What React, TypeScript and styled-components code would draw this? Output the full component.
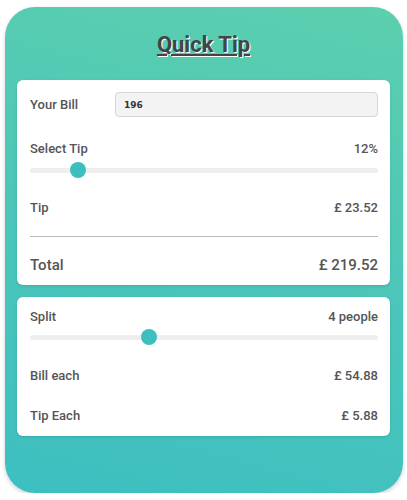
import React, { useState } from "react";
import styled, { createGlobalStyle } from "styled-components";

const GlobalStyle = createGlobalStyle`
  body {
    margin: 0;
    background: #fff;
    font-family: Roboto, "Liberation Sans", sans-serif;
  }
`;

export default function App() {
  const [bill, setBill] = useState("196");
  const [tip, setTip] = useState(12);
  const [people, setPeople] = useState(4);

  const amount = parseFloat(bill) || 0;
  const tipValue = (amount * tip) / 100;
  const total = amount + tipValue;

  return (
    <>
      <GlobalStyle />
      <Wrapper>
        <Title>Quick Tip</Title>
        <Card>
          <BillRow>
            <Label>Your Bill</Label>
            <BillInput value={bill} onChange={(e) => setBill(e.target.value)} />
          </BillRow>
          <Row $top={24}>
            <Label>Select Tip</Label>
            <Value>{tip}%</Value>
          </Row>
          <Slider
            type="range"
            min={0}
            max={100}
            value={tip}
            onChange={(e) => setTip(Number(e.target.value))}
            $top={5}
          />
          <Row $top={22}>
            <Label>Tip</Label>
            <Value>£ {tipValue.toFixed(2)}</Value>
          </Row>
          <Divider />
          <Row $top={19} $big>
            <Label>Total</Label>
            <Value>£ {total.toFixed(2)}</Value>
          </Row>
        </Card>
        <Card $bottom={12}>
          <Row $top={0}>
            <Label>Split</Label>
            <Value>{people} people</Value>
          </Row>
          <Slider
            type="range"
            min={1}
            max={10}
            value={people}
            onChange={(e) => setPeople(Number(e.target.value))}
            $top={4}
          />
          <Row $top={23}>
            <Label>Bill each</Label>
            <Value>£ {(total / people).toFixed(2)}</Value>
          </Row>
          <Row $top={24}>
            <Label>Tip Each</Label>
            <Value>£ {(tipValue / people).toFixed(2)}</Value>
          </Row>
        </Card>
      </Wrapper>
    </>
  );
}

const Wrapper = styled.div`
  box-sizing: border-box;
  width: 398px;
  height: 486px;
  margin: 7px 0 0 5px;
  padding: 25px 13px 0 12px;
  border-radius: 30px;
  background: linear-gradient(15deg, #3dbfc1 0%, #4cc6b9 50%, #5ccfae 100%);
  box-shadow: 0 2px 4px rgba(0, 0, 0, 0.18);
  display: flex;
  flex-direction: column;
  gap: 12px;
`;

const Title = styled.h1`
  margin: 0 0 10px;
  text-align: center;
  font-size: 22px;
  line-height: 26px;
  font-weight: 700;
  color: #444;
  text-decoration: underline;
  text-decoration-thickness: 2px;
  text-underline-offset: 2px;
  text-shadow: 1px 1px 0 #fff;
`;

const Card = styled.div<{ $bottom?: number }>`
  background: #fff;
  border-radius: 6px;
  padding: 12px 12px ${(p) => p.$bottom ?? 11}px 13px;
  box-shadow: 0 1px 3px rgba(0, 0, 0, 0.12);
  display: flex;
  flex-direction: column;
`;

const BillRow = styled.div`
  display: flex;
  align-items: center;
  gap: 0;
`;

const Row = styled.div<{ $top: number; $big?: boolean }>`
  display: flex;
  justify-content: space-between;
  align-items: center;
  margin-top: ${(p) => p.$top}px;
  font-size: ${(p) => (p.$big ? 15 : 13)}px;
  line-height: ${(p) => (p.$big ? 18 : 16)}px;
`;

const Label = styled.span`
  font-size: inherit;
  font-weight: 500;
  color: #555;
  min-width: 85px;
  font-size: 13px;
  ${Row} & {
    font-size: inherit;
  }
`;

const Value = styled.span`
  font-weight: 500;
  color: #555;
`;

const BillInput = styled.input`
  box-sizing: border-box;
  flex: 1;
  height: 25px;
  padding: 0 8px;
  border: 1px solid #d6d6d6;
  border-radius: 4px;
  background: #f3f3f3;
  font-family: "DejaVu Sans", sans-serif;
  font-size: 9px;
  font-weight: 700;
  color: #333;
  outline: none;
`;

const Slider = styled.input<{ $top: number }>`
  -webkit-appearance: none;
  appearance: none;
  width: 100%;
  height: 16px;
  margin: ${(p) => p.$top}px 0 0;
  background: transparent;

  &::-webkit-slider-runnable-track {
    height: 5px;
    border-radius: 3px;
    background: #eee;
  }

  &::-webkit-slider-thumb {
    -webkit-appearance: none;
    width: 16px;
    height: 16px;
    margin-top: -5.5px;
    border-radius: 50%;
    background: #3dbfbf;
    border: none;
  }
`;

const Divider = styled.hr`
  width: 100%;
  margin: 20px 0 0;
  border: none;
  border-top: 1px solid #bbb;
`;
